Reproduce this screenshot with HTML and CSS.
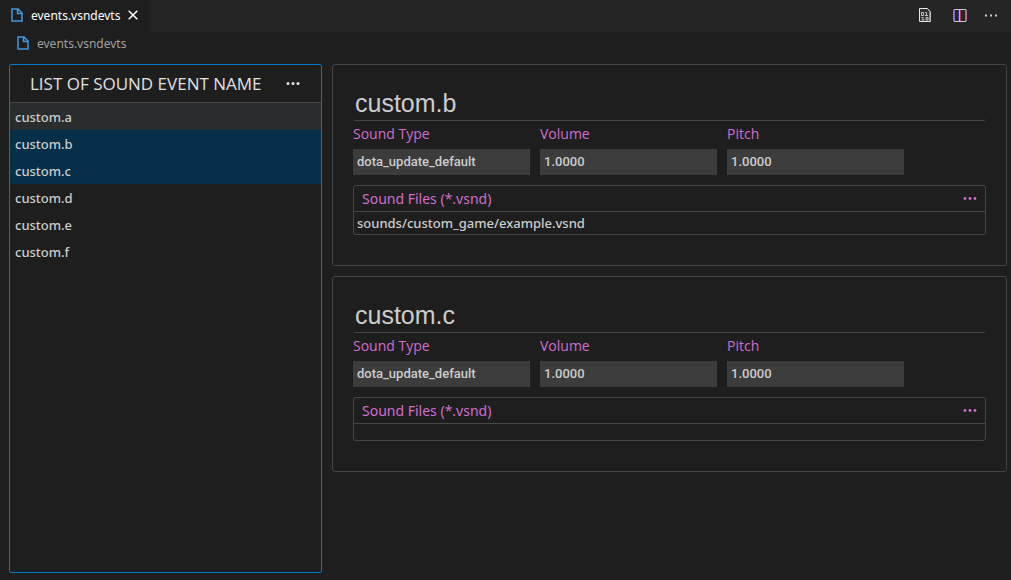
FILE: index.html
```html
<!DOCTYPE html>
<html lang="en">
<head>
<meta charset="utf-8">
<meta name="viewport" content="width=device-width, initial-scale=1">
<title>events.vsndevts</title>
<link rel="stylesheet" href="styles.css">
</head>
<body>
<header class="tabbar">
  <div class="tab">
    <svg class="file-icon" viewBox="0 0 12 14" aria-hidden="true"><path d="M1.500 1h5.500l4 4v8H1V1zM6.500 1V5.500H11"/></svg>
    <span class="tab-name">events.vsndevts</span>
    <button class="icon-button" type="button" aria-label="Close"><svg class="close-icon" viewBox="0 0 10 10"><path d="M.7.700l8.600 8.600M9.300.700L.700 9.300"/></svg></button>
  </div>
  <div class="actions">
    <button class="icon-button" type="button" aria-label="Open as text">
      <svg class="binary-icon" viewBox="0 0 12 14"><path class="fold" d="M8 0l4 4v10h-2V4H8z"/><path class="page" d="M.5 13.500V.5h8l2.500 3v10z"/><path class="digits" d="M2.500 4.500h2v3h-2zM6 4.500h1.500v3M6 7.500h3M2.500 9.500H4v2.500M2.500 12h3M7 9.500h2V12H7z"/></svg>
    </button>
    <button class="icon-button" type="button" aria-label="Split editor">
      <svg class="split-icon" viewBox="0 0 14 13"><path class="shade" d="M1.500 1v11M5.500 1v11M12.500 1v11"/><path class="fringe" d="M.5 1v11M7.500 1v11M13.500 1v11"/><path class="sides" d="M1 1v11M6.500 1v11M13 1v11"/><path class="rails" d="M1 .5h12M1 12.500h12"/></svg>
    </button>
    <button class="icon-button" type="button" aria-label="More actions"><svg class="dots" viewBox="0 0 14 3"><path d="M1 .5h2v2H1zM6 .5h2v2H6zM11 .5h2v2h-2z"/></svg></button>
  </div>
</header>
<nav class="breadcrumb" aria-label="Breadcrumb">
  <svg class="file-icon" viewBox="0 0 12 14" aria-hidden="true"><path d="M1.500 1h5.500l4 4v8H1V1zM6.500 1V5.500H11"/></svg>
  <span>events.vsndevts</span>
</nav>
<main class="workspace">
  <section class="event-list">
    <div class="list-head">
      <h1 class="list-title">LIST OF SOUND EVENT NAME</h1>
      <button class="icon-button" type="button" aria-label="List actions"><svg class="dots" viewBox="0 0 14 3"><circle cx="2" cy="1.500" r="1.500"/><circle cx="7" cy="1.500" r="1.500"/><circle cx="12" cy="1.500" r="1.500"/></svg></button>
    </div>
    <ul class="items">
      <li class="item hovered">custom.a</li>
      <li class="item selected">custom.b</li>
      <li class="item selected">custom.c</li>
      <li class="item">custom.d</li>
      <li class="item">custom.e</li>
      <li class="item">custom.f</li>
    </ul>
  </section>
  <div class="details">
    <article class="card">
      <h2 class="card-title">custom.b</h2>
      <div class="fields">
        <div class="field"><label for="b-type">Sound Type</label><input id="b-type" type="text" value="dota_update_default"></div>
        <div class="field"><label for="b-volume">Volume</label><input id="b-volume" type="text" value="1.0000"></div>
        <div class="field"><label for="b-pitch">Pitch</label><input id="b-pitch" type="text" value="1.0000"></div>
      </div>
      <section class="files">
        <div class="files-head">
          <h3 class="files-title">Sound Files (*.vsnd)</h3>
          <button class="icon-button" type="button" aria-label="File actions"><svg class="dots" viewBox="0 0 14 3"><circle cx="2" cy="1.500" r="1.400"/><circle cx="7" cy="1.500" r="1.400"/><circle cx="12" cy="1.500" r="1.400"/></svg></button>
        </div>
        <ul class="file-rows"><li class="file-row">sounds/custom_game/example.vsnd</li></ul>
      </section>
    </article>
    <article class="card">
      <h2 class="card-title">custom.c</h2>
      <div class="fields">
        <div class="field"><label for="c-type">Sound Type</label><input id="c-type" type="text" value="dota_update_default"></div>
        <div class="field"><label for="c-volume">Volume</label><input id="c-volume" type="text" value="1.0000"></div>
        <div class="field"><label for="c-pitch">Pitch</label><input id="c-pitch" type="text" value="1.0000"></div>
      </div>
      <section class="files">
        <div class="files-head">
          <h3 class="files-title">Sound Files (*.vsnd)</h3>
          <button class="icon-button" type="button" aria-label="File actions"><svg class="dots" viewBox="0 0 14 3"><circle cx="2" cy="1.500" r="1.400"/><circle cx="7" cy="1.500" r="1.400"/><circle cx="12" cy="1.500" r="1.400"/></svg></button>
        </div>
        <ul class="file-rows"></ul>
      </section>
    </article>
  </div>
</main>
</body>
</html>
```
FILE: styles.css
```css
* { box-sizing: border-box; }
body {
  margin: 0;
  min-height: 100vh;
  display: flex;
  flex-direction: column;
  background: #1e1e1e;
  color: #cccccc;
  font-family: "Noto Sans", "Open Sans", sans-serif;
  font-size: 13px;
}
h1, h2, h3, ul { margin: 0; padding: 0; font-weight: 400; }
ul { list-style: none; }
svg { display: block; fill: none; }
.icon-button {
  display: flex;
  padding: 0;
  border: 0;
  background: none;
  color: inherit;
}
.tabbar {
  display: flex;
  justify-content: space-between;
  height: 32px;
  background: #252526;
}
.tab {
  display: flex;
  align-items: center;
  padding: 0 11px 2px;
  background: #1e1e1e;
  color: #ffffff;
  font-size: 12px;
}
.tab-name { margin: 0 8px; }
.file-icon { width: 12px; height: 14px; stroke: #4298e0; stroke-width: 1.5; }
.close-icon { width: 10px; height: 10px; stroke: #ffffff; stroke-width: 1.5; }
.actions {
  display: flex;
  align-items: center;
  gap: 17px;
  padding: 0 13px 2px;
}
.binary-icon { width: 12px; height: 14px; margin-right: 5px; }
.binary-icon .fold { fill: #909090; }
.binary-icon .page { stroke: #e8e8e8; fill: #303030; }
.binary-icon .digits { stroke: #c5c5c5; }
.split-icon { width: 14px; height: 13px; }
.split-icon .rails { stroke: #d0c8c8; }
.split-icon .sides { stroke: #d8a0d8; }
.split-icon .shade { stroke: #3830a8; }
.split-icon .fringe { stroke: #a04040; }
.dots { width: 14px; height: 3px; fill: currentColor; }
.breadcrumb {
  display: flex;
  align-items: center;
  gap: 8px;
  height: 22px;
  padding: 0 17px;
  color: #a0a0a0;
  font-size: 12px;
}
.workspace {
  flex: 1;
  display: flex;
  gap: 10px;
  padding: 10px 4px 7px 9px;
}
.event-list {
  flex: 0 0 313px;
  border: 1px solid #007acc;
  border-radius: 2px;
}
.list-head {
  display: flex;
  align-items: center;
  justify-content: space-between;
  height: 38px;
  padding: 0 21px 0 20px;
  border-bottom: 1px solid #454545;
  color: #e0e0e0;
}
.list-title { font-family: "Open Sans", sans-serif; font-size: 17px; white-space: nowrap; }
.item {
  padding: 2px 5px 0;
  font-weight: 500;
  line-height: 25px;
}
.hovered { background: #2a2d2e; }
.selected { background: #062f4a; }
.details {
  flex: 1;
  display: flex;
  flex-direction: column;
  gap: 10px;
  min-width: 0;
}
.card {
  padding: 20px 20px 30px;
  border: 1px solid #454545;
  border-radius: 3px;
}
.card-title {
  padding: 2px 2px 0;
  border-bottom: 1px solid #454545;
  border-radius: 3px;
  font-family: "Liberation Sans", Arial, sans-serif;
  font-size: 25px;
  line-height: 33px;
}
.fields { display: flex; gap: 10px; }
.field { flex: 0 1 177px; min-width: 0; }
.field label {
  display: block;
  padding-bottom: 2px;
  color: #d16dce;
  font-family: "Open Sans", sans-serif;
  font-size: 14px;
  line-height: 26px;
}
.field input {
  display: block;
  width: 100%;
  height: 26px;
  padding: 0 4px 2px;
  border: 0;
  background: #3c3c3c;
  color: #cccccc;
  font: 500 13px Roboto, Arial, sans-serif;
}
.files {
  margin-top: 10px;
  border: 1px solid #454545;
  border-radius: 3px;
}
.files-head {
  display: flex;
  align-items: center;
  justify-content: space-between;
  height: 26px;
  padding: 0 8px;
  border-bottom: 1px solid #454545;
  color: #d16dce;
}
.files-title { font-size: 14px; }
.file-rows { min-height: 16px; }
.file-row { padding: 0 3px; font-weight: 500; line-height: 22px; }
```
